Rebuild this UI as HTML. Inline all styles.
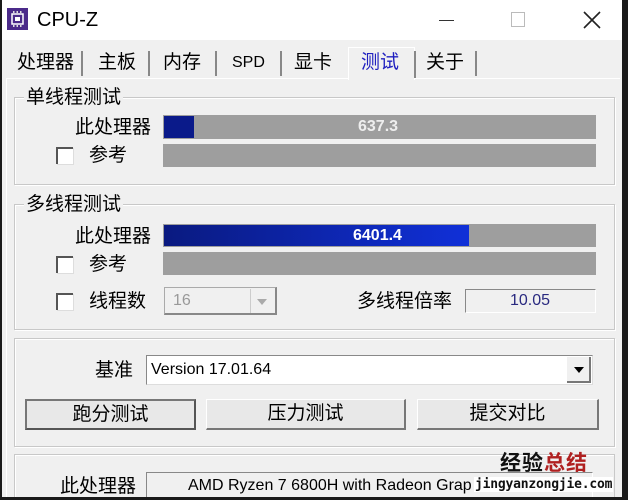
<!DOCTYPE html>
<html style="width:628px;height:500px;overflow:hidden"><head><meta charset="utf-8"><style>
*{margin:0;padding:0;box-sizing:border-box}
body{width:628px;height:500px;background:#1a1a1a;position:relative;overflow:hidden;font-family:"Liberation Sans","Noto Sans CJK SC",sans-serif;color:#000}
.a{position:absolute}
#win{left:2px;top:0;width:620px;height:497px;background:#f0f0f0;overflow:hidden}
#title{left:2px;top:0;width:620px;height:40px;background:#fff}
.t{position:absolute;font-size:19px;white-space:nowrap;line-height:1}
.grp{position:absolute;border:1px solid #c8c8c8;box-shadow:inset 1px 1px 0 #fff,1px 1px 0 #fff}
.gt{position:absolute;background:#f0f0f0;font-size:19px;line-height:1;padding:0 2px}
.bar{position:absolute;background:#9e9e9e}
.cb{position:absolute;width:17px;height:17px;background:#fff;border-left:2px solid #555;border-top:2px solid #555;box-shadow:1px 1px 0 #ddd}
.btn{position:absolute;background:#e8e8e8;border:1px solid #fff;border-right:2px solid #777;border-bottom:2px solid #777;font-size:19px;text-align:center;line-height:27px}
.sunk{position:absolute;background:#f0f0f0;border-left:1px solid #888;border-top:1px solid #888;border-right:1px solid #fff;border-bottom:1px solid #fff}
</style></head><body>
<div id="win" class="a"></div>
<div id="title" class="a"></div>
<svg class="a" style="left:7px;top:8px" width="21" height="22"><rect width="21" height="22" fill="#4b2a8a"/><rect x="5" y="6" width="11" height="10" fill="none" stroke="#fff" stroke-width="1.5"/><rect x="8" y="9" width="5" height="4" fill="#fff"/><g fill="#ddd"><rect x="6" y="3" width="1.5" height="2"/><rect x="9.5" y="3" width="1.5" height="2"/><rect x="13" y="3" width="1.5" height="2"/><rect x="6" y="17" width="1.5" height="2"/><rect x="9.5" y="17" width="1.5" height="2"/><rect x="13" y="17" width="1.5" height="2"/></g></svg>
<div class="t" style="left:37px;top:10px;font-size:20px">CPU-Z</div>
<div class="a" style="left:439px;top:20px;width:15px;height:1px;background:#333"></div>
<div class="a" style="left:511px;top:12px;width:14px;height:15px;border:1px solid #bbb"></div>
<svg class="a" style="left:583px;top:11px" width="18" height="18"><path d="M1 1L17 17M17 1L1 17" stroke="#222" stroke-width="1.6"/></svg>
<div class="a" style="left:6px;top:78px;width:614px;height:419px;border-top:1px solid #fff;border-left:1px solid #fff"></div>
<div class="a" style="left:348px;top:47px;width:67px;height:33px;background:#f0f0f0;border:1px solid #fff;border-bottom:none"></div>
<div class="t" style="left:17px;top:53px">处理器</div><div class="a" style="left:81px;top:51px;width:2px;height:25px;background:#888"></div>
<div class="t" style="left:98px;top:53px">主板</div><div class="a" style="left:148px;top:51px;width:2px;height:25px;background:#888"></div>
<div class="t" style="left:163px;top:53px">内存</div><div class="a" style="left:215px;top:51px;width:2px;height:25px;background:#888"></div>
<div class="t" style="left:232px;top:55px;font-size:16px">SPD</div><div class="a" style="left:280px;top:51px;width:2px;height:25px;background:#888"></div>
<div class="t" style="left:294px;top:53px">显卡</div>
<div class="t" style="left:361px;top:53px;color:#2020c0">测试</div><div class="a" style="left:414px;top:51px;width:2px;height:27px;background:#888"></div>
<div class="t" style="left:426px;top:53px">关于</div><div class="a" style="left:475px;top:51px;width:2px;height:25px;background:#888"></div>
<div class="grp" style="left:14px;top:97px;width:601px;height:88px"></div>
<div class="gt" style="left:24px;top:88px">单线程测试</div>
<div class="t" style="left:75px;top:118px">此处理器</div>
<div class="bar" style="left:163px;top:115px;width:433px;height:24px"></div>
<div class="a" style="left:164px;top:116px;width:30px;height:22px;background:#0a1a8a"></div>
<div class="t" style="left:358px;top:119px;color:#eee;font-weight:bold;font-size:16px">637.3</div>
<div class="cb" style="left:56px;top:147px"></div>
<div class="t" style="left:89px;top:146px">参考</div>
<div class="bar" style="left:163px;top:144px;width:433px;height:23px"></div>
<div class="grp" style="left:14px;top:204px;width:601px;height:126px"></div>
<div class="gt" style="left:24px;top:195px">多线程测试</div>
<div class="t" style="left:75px;top:227px">此处理器</div>
<div class="bar" style="left:163px;top:224px;width:433px;height:23px"></div>
<div class="a" style="left:164px;top:225px;width:305px;height:21px;background:linear-gradient(90deg,#0a1a80,#1030d8)"></div>
<div class="t" style="left:353px;top:228px;color:#fff;font-weight:bold;font-size:16px">6401.4</div>
<div class="cb" style="left:56px;top:256px"></div>
<div class="t" style="left:89px;top:255px">参考</div>
<div class="bar" style="left:163px;top:252px;width:433px;height:23px"></div>
<div class="cb" style="left:56px;top:293px"></div>
<div class="t" style="left:89px;top:292px">线程数</div>
<div class="a" style="left:164px;top:287px;width:113px;height:28px;border:1px solid #aaa;border-right:2px solid #888;border-bottom:2px solid #888;background:#f0f0f0"></div>
<div class="t" style="left:173px;top:293px;color:#999;font-size:16px">16</div>
<div class="a" style="left:250px;top:289px;width:24px;height:24px;border-left:1px solid #ccc"></div>
<svg class="a" style="left:257px;top:299px" width="10" height="6"><path d="M0 0H10L5 6Z" fill="#aaa"/></svg>
<div class="t" style="left:357px;top:292px">多线程倍率</div>
<div class="sunk" style="left:465px;top:289px;width:131px;height:24px"></div>
<div class="t" style="left:510px;top:293px;color:#2a2a80;font-size:16px">10.05</div>
<div class="grp" style="left:14px;top:338px;width:601px;height:109px"></div>
<div class="t" style="left:95px;top:361px">基准</div>
<div class="a" style="left:146px;top:355px;width:447px;height:30px;background:#fff;border:1px solid #888;border-right:1px solid #ddd;border-bottom:1px solid #ddd"></div>
<div class="t" style="left:151px;top:362px;font-size:16px">Version 17.01.64</div>
<div class="a" style="left:567px;top:357px;width:24px;height:26px;background:#f0f0f0;border-right:2px solid #777;border-bottom:2px solid #777"></div>
<svg class="a" style="left:574px;top:367px" width="10" height="6"><path d="M0 0H10L5 6Z" fill="#000"/></svg>
<div class="btn" style="left:25px;top:399px;width:171px;height:31px;border:2px solid #555;border-top-color:#777;border-left-color:#777">跑分测试</div>
<div class="btn" style="left:206px;top:399px;width:200px;height:31px">压力测试</div>
<div class="btn" style="left:417px;top:399px;width:182px;height:31px">提交对比</div>
<div class="grp" style="left:14px;top:454px;width:601px;height:43px;border-bottom:none;box-shadow:inset 1px 1px 0 #fff"></div>
<div class="t" style="left:60px;top:477px">此处理器</div>
<div class="sunk" style="left:146px;top:472px;width:447px;height:25px;border-bottom:none"></div>
<div class="t" style="left:188px;top:478px;font-size:16px">AMD Ryzen 7 6800H with Radeon Grap</div>
<div class="t" style="left:500px;top:453px;font-size:21px;font-weight:bold;color:#111;letter-spacing:1px">经验<span style="color:#b02020">总结</span></div>
<div class="t" style="left:474px;top:477px;font-size:13px;font-weight:bold;font-family:'DejaVu Sans Mono',monospace;color:#111;background:#fff;padding:1px 1px;letter-spacing:-0.2px">jingyanzongjie.com</div>
<div class="a" style="left:0;top:497px;width:628px;height:3px;background:#1a1a1a"></div>
<div class="a" style="left:622px;top:0;width:6px;height:500px;background:#1a1a1a"></div>
</body></html>
